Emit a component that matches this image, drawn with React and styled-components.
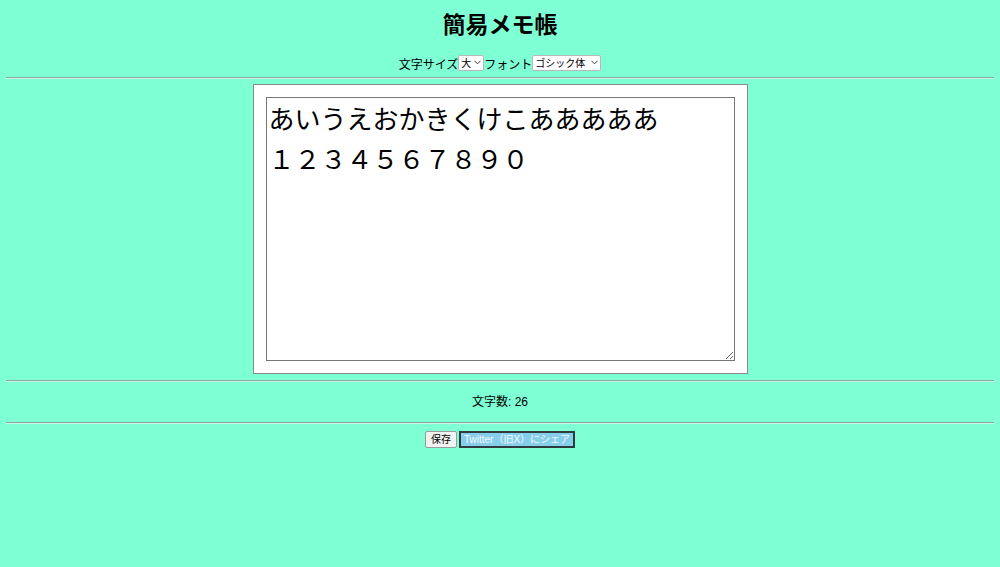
import React, { useState } from 'react'
import styled, { createGlobalStyle } from 'styled-components'

const GlobalStyle = createGlobalStyle`
  html, body {
    margin: 0;
    padding: 0;
    background: #7fffd4;
  }
  body {
    font-family: "Noto Sans CJK JP", "Noto Sans", sans-serif;
    color: #000;
  }
`

const Page = styled.div`
  padding: 0 6px;
`
const Title = styled.h1`
  margin: 9px 0 0;
  font-size: 23px;
  line-height: 28px;
  font-weight: bold;
  text-align: center;
`
const Controls = styled.div`
  display: flex;
  justify-content: center;
  align-items: center;
  margin-top: 17px;
  height: 18px;
  font-size: 12px;
`
const SelectWrap = styled.span`
  position: relative;
  display: inline-flex;
  width: ${p => p.$w}px;
  height: 16px;
`
const Select = styled.select`
  appearance: none;
  width: 100%;
  height: 100%;
  font-family: "Noto Sans CJK JP", sans-serif;
  font-size: 10px;
  line-height: 14px;
  padding: 0 0 0 2px;
  border: 1px solid #b8b8b8;
  border-radius: 2px;
  background: #fff;
  color: #000;
  outline: none;
`
const Chevron = styled.svg`
  position: absolute;
  right: 3px;
  top: 5px;
  width: 7px;
  height: 5px;
  pointer-events: none;
`
const Rule = styled.hr`
  margin: ${p => p.$top}px 0 0;
  border: 0;
  border-top: 1px solid #8fa8a0;
  border-bottom: 1px solid #c8f5e6;
  height: 0;
`
const Box = styled.div`
  width: 469px;
  margin: 5px auto 0;
  padding: 12px;
  background: #fff;
  border: 1px solid #8a8a8a;
`
const Memo = styled.textarea`
  display: block;
  box-sizing: border-box;
  width: 469px;
  height: 264px;
  margin: 0;
  padding: 0 2px;
  font-family: "Noto Sans CJK JP", sans-serif;
  font-size: 26px;
  line-height: 40px;
  border: 1px solid #767676;
  resize: both;
  outline: none;
  color: #000;
`
const Count = styled.div`
  text-align: center;
  font-family: "Liberation Sans", "Noto Sans CJK JP", sans-serif;
  font-size: 12px;
  line-height: 16px;
  margin-top: 12px;
  margin-bottom: 12px;
`
const Buttons = styled.div`
  display: flex;
  justify-content: center;
  gap: 2px;
  margin-top: 7px;
`
const Button = styled.button`
  font-family: "Liberation Sans", "Noto Sans CJK JP", sans-serif;
  font-size: 10px;
  line-height: 14px;
  height: 17px;
  padding: 0 5px;
  border: 1px solid #9a9a9a;
  border-radius: 2px;
  background: #f2f2f2;
  color: #000;
`
const ShareButton = styled(Button)`
  background: #87ceeb;
  color: #f4fbff;
  border: 2px solid #2f3a3f;
  border-radius: 0;
  padding: 0 3px;
`

const Arrow = () => (
  <Chevron viewBox="0 0 7 5">
    <path d="M0.5 0.8 L3.5 3.8 L6.5 0.8" fill="none" stroke="#333" strokeWidth="1" />
  </Chevron>
)

export default function App() {
  const [text, setText] = useState('あいうえおかきくけこあああああ\n１２３４５６７８９０')
  return (
    <Page>
      <GlobalStyle />
      <Title>簡易メモ帳</Title>
      <Controls>
        文字サイズ
        <SelectWrap $w={26}>
          <Select defaultValue="大">
            <option>小</option>
            <option>中</option>
            <option>大</option>
          </Select>
          <Arrow />
        </SelectWrap>
        フォント
        <SelectWrap $w={69}>
          <Select defaultValue="ゴシック体">
            <option>ゴシック体</option>
            <option>明朝体</option>
          </Select>
          <Arrow />
        </SelectWrap>
      </Controls>
      <Rule $top={5} />
      <Box>
        <Memo value={text} onChange={e => setText(e.target.value)} />
      </Box>
      <Rule $top={6} />
      <Count>文字数: {text.length}</Count>
      <Rule $top={0} />
      <Buttons>
        <Button>保存</Button>
        <ShareButton>Twitter（旧X）にシェア</ShareButton>
      </Buttons>
    </Page>
  )
}
